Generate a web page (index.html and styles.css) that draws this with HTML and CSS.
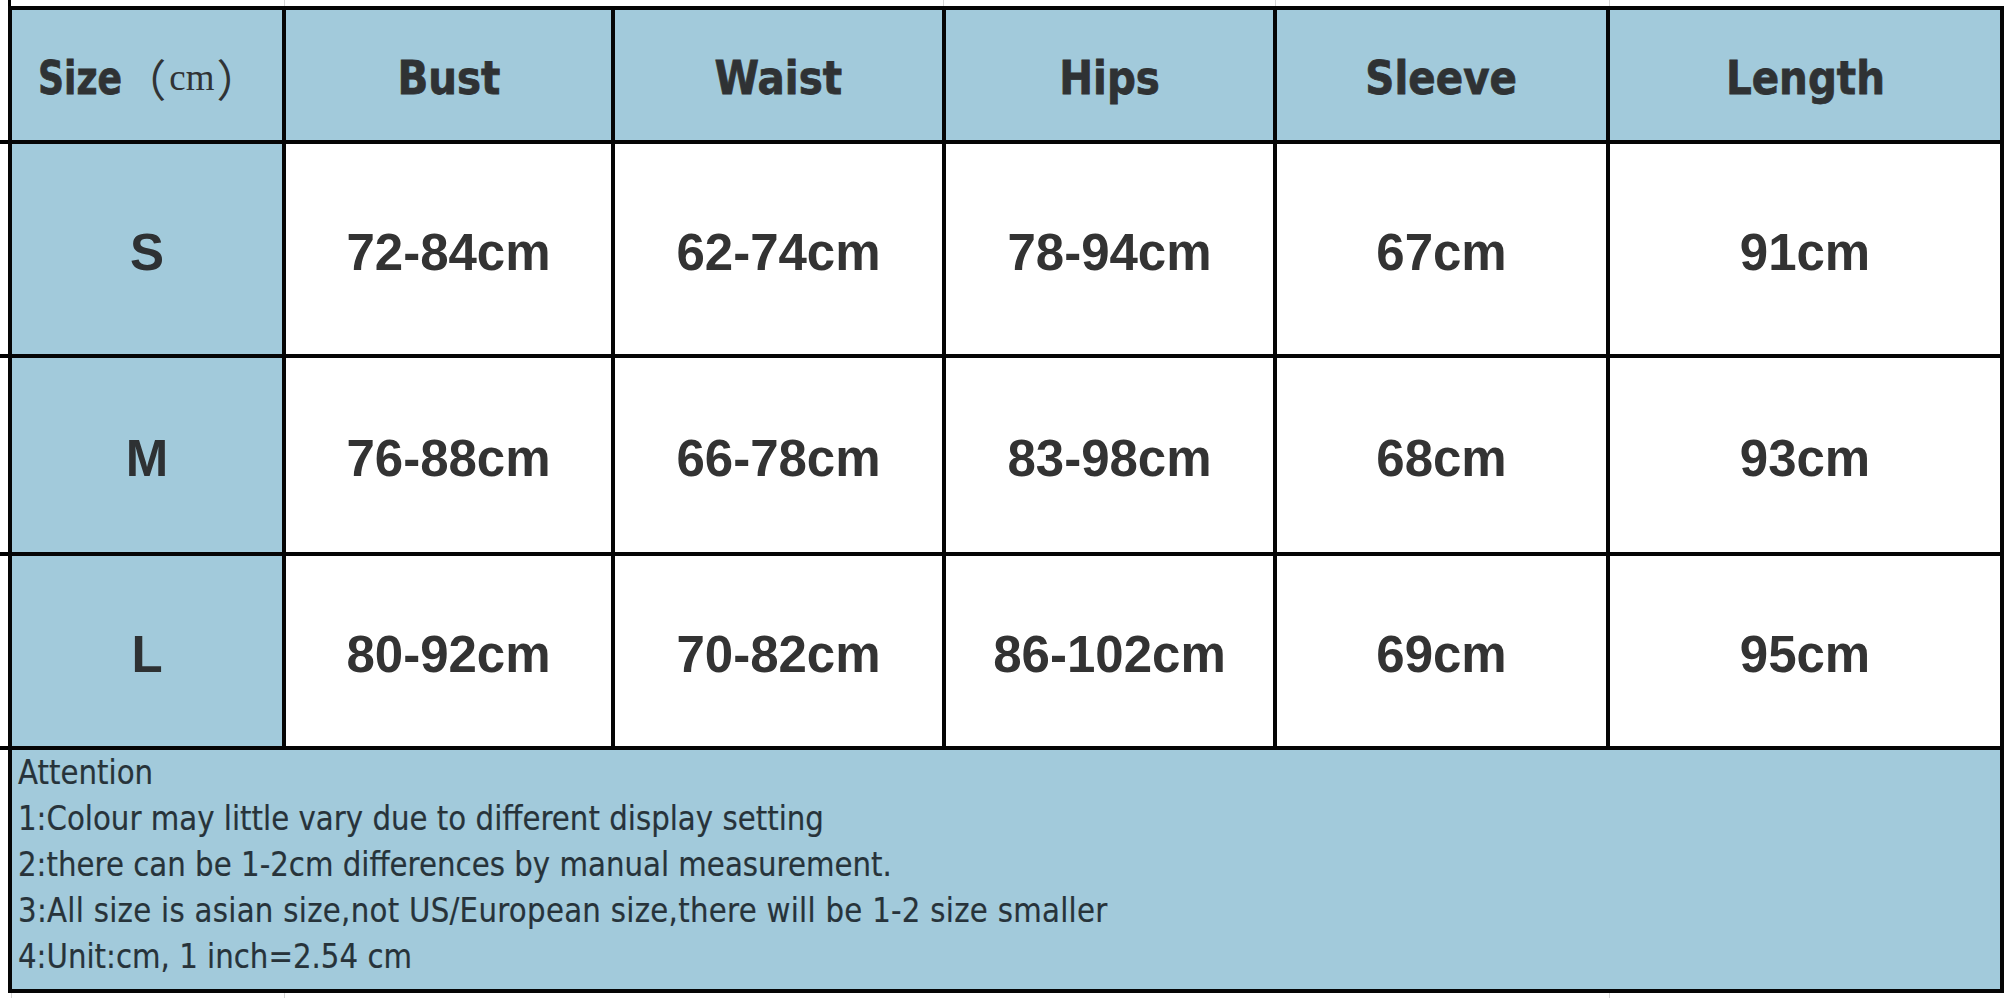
FILE: index.html
```html
<!DOCTYPE html>
<html lang="en">
<head>
<meta charset="utf-8">
<title>Size Chart</title>
<link rel="stylesheet" href="styles.css">
</head>
<body>
<div class="sheet">
  <div class="chart">
    <div class="cell head head-first"><span class="hd hd-size">Size</span><span class="unit"><span class="paren">（</span><span class="unit-cm">cm</span><span class="paren">）</span></span></div>
    <div class="cell head"><span class="hd">Bust</span></div>
    <div class="cell head"><span class="hd">Waist</span></div>
    <div class="cell head"><span class="hd">Hips</span></div>
    <div class="cell head"><span class="hd">Sleeve</span></div>
    <div class="cell head"><span class="hd">Length</span></div>

    <div class="cell side">S</div>
    <div class="cell val">72-84cm</div>
    <div class="cell val">62-74cm</div>
    <div class="cell val">78-94cm</div>
    <div class="cell val">67cm</div>
    <div class="cell val">91cm</div>

    <div class="cell side">M</div>
    <div class="cell val">76-88cm</div>
    <div class="cell val">66-78cm</div>
    <div class="cell val">83-98cm</div>
    <div class="cell val">68cm</div>
    <div class="cell val">93cm</div>

    <div class="cell side">L</div>
    <div class="cell val">80-92cm</div>
    <div class="cell val">70-82cm</div>
    <div class="cell val">86-102cm</div>
    <div class="cell val">69cm</div>
    <div class="cell val">95cm</div>

    <div class="notes">
      <div class="notes-text">
        <div class="note-line">Attention</div>
        <div class="note-line">1:Colour may little vary due to different display setting</div>
        <div class="note-line">2:there can be 1-2cm differences by manual measurement.</div>
        <div class="note-line note-wide">3:All size is asian size,not US/European size,there will be 1-2 size smaller</div>
        <div class="note-line">4:Unit:cm, 1 inch=2.54 cm</div>
      </div>
    </div>
  </div>
</div>
</body>
</html>
```
FILE: styles.css
```css
html, body {
  margin: 0;
  padding: 0;
  background: #ffffff;
}

.sheet {
  width: 2006px;
  height: 998px;
  box-sizing: border-box;
  padding: 6px 0 0 8px;
  overflow: hidden;
  background:
    linear-gradient(#000, #000) 8px 0 / 3px 6px no-repeat,
    linear-gradient(#000, #000) 0 140px / 8px 4px no-repeat,
    linear-gradient(#000, #000) 0 354px / 8px 4px no-repeat,
    linear-gradient(#000, #000) 0 552px / 8px 4px no-repeat,
    linear-gradient(#000, #000) 0 746px / 8px 4px no-repeat,
    linear-gradient(#d6d6d6, #d6d6d6) 284px 0 / 1px 6px no-repeat,
    linear-gradient(#d6d6d6, #d6d6d6) 943px 0 / 1px 6px no-repeat,
    linear-gradient(#d6d6d6, #d6d6d6) 1275px 0 / 1px 6px no-repeat,
    linear-gradient(#d6d6d6, #d6d6d6) 1609px 0 / 1px 6px no-repeat,
    linear-gradient(#d6d6d6, #d6d6d6) 11px 993px / 1px 5px no-repeat,
    linear-gradient(#d6d6d6, #d6d6d6) 284px 993px / 1px 5px no-repeat,
    linear-gradient(#d6d6d6, #d6d6d6) 1609px 993px / 1px 5px no-repeat,
    #ffffff;
}

.chart {
  display: grid;
  width: 1996px;
  box-sizing: border-box;
  padding: 4px;
  gap: 4px;
  background: #050505;
  grid-template-columns: 270px 325px 327px 327px 329px 390px;
  grid-template-rows: 130px 210px 194px 190px 239px;
}

.cell {
  display: flex;
  align-items: center;
  justify-content: center;
  white-space: nowrap;
}

.head {
  background: #a2cadb;
  color: #2f3234;
  padding-top: 5px;
  box-sizing: border-box;
}

.head-first {
  justify-content: flex-start;
  padding-left: 26px;
}

.hd {
  display: inline-block;
  font-family: "DejaVu Sans", "Liberation Sans", sans-serif;
  font-weight: bold;
  font-size: 47px;
  transform: scaleX(0.86);
  -webkit-text-stroke: 0.8px #2f3234;
}

.hd-size {
  transform: scaleX(0.77);
  transform-origin: left center;
  margin-right: -25px;
}

.unit {
  display: inline-flex;
  align-items: center;
  color: #303335;
}

.paren {
  font-family: "Noto Sans CJK SC", "Noto Sans CJK JP", sans-serif;
  font-weight: normal;
  font-size: 44px;
}

.unit-cm {
  font-family: "Liberation Serif", serif;
  font-size: 37px;
  font-weight: normal;
  margin: 0 2px 0 3px;
}

.side {
  background: #a2cadb;
  color: #2e3133;
  font-family: "Liberation Sans", Arial, sans-serif;
  font-weight: bold;
  font-size: 51px;
  padding-top: 6px;
  box-sizing: border-box;
}

.val {
  background: #ffffff;
  color: #333333;
  font-family: "Liberation Sans", Arial, sans-serif;
  font-weight: bold;
  font-size: 51px;
  padding-top: 6px;
  box-sizing: border-box;
}

.notes {
  grid-column: 1 / -1;
  background: #a2cadb;
  padding: 0 0 0 6px;
  overflow: hidden;
}

.notes-text {
  font-family: "DejaVu Sans", "Liberation Sans", sans-serif;
  font-size: 33px;
  line-height: 46px;
  color: #27333a;
  white-space: nowrap;
  transform: scaleX(0.887);
  transform-origin: left top;
  -webkit-text-stroke: 0.2px #27333a;
}

.note-wide {
  letter-spacing: 0.3px;
}
```
